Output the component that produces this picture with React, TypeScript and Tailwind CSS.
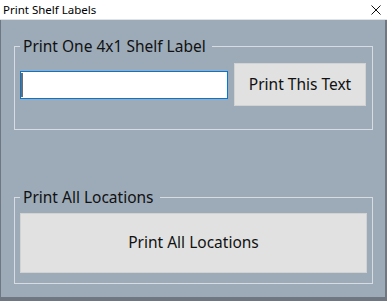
import { useState } from 'react';

const font = { fontFamily: '"Noto Sans", "Open Sans", sans-serif' };

export default function App() {
  const [text, setText] = useState('');

  return (
    <div className="w-[387px] h-[301px] flex flex-col bg-[#9dabb9] text-[#111]" style={font}>
      {/* title bar */}
      <div className="h-[20px] shrink-0 bg-white flex items-center justify-between pl-[3px] pr-[5px] border-b border-[#dfe3e7]">
        <span className="text-[11.5px] leading-none text-black">Print Shelf Labels</span>
        <svg width="10" height="10" viewBox="0 0 10 10" className="mr-[1px]">
          <path d="M0.5 0.5 L9.5 9.5 M9.5 0.5 L0.5 9.5" stroke="#111" strokeWidth="1" fill="none" />
        </svg>
      </div>

      <div className="flex-1 flex flex-col border-l border-r-2 border-b-4 border-[#6f7882] pl-[13px] pr-[12px]">
        <fieldset className="mt-[16px] h-[94px] border border-[#d6dce2] px-[5px]">
          <legend className="pl-[3px] pr-[6px] text-[15.5px] leading-5">Print One 4x1 Shelf Label</legend>
          <div className="mt-[7px] flex items-center gap-[6px]">
            <div className="relative">
              <input
                value={text}
                onChange={e => setText(e.target.value)}
                className="block w-[208px] h-[28px] bg-white border border-[#0078d7] outline-none px-[2px] text-[15.5px] caret-transparent"
              />
              {/* caret */}
              <span className="absolute left-[1px] top-[2px] w-[2px] h-[24px] bg-[#6d6d6d]" />
            </div>
            <button className="w-[132px] h-[43px] bg-[#e1e1e1] border border-[#d2d2d2] text-[15.5px]">
              Print This Text
            </button>
          </div>
        </fieldset>

        <fieldset className="mt-[57px] h-[97px] border border-[#d6dce2] px-[5px]">
          <legend className="pl-[3px] pr-[6px] text-[15.5px] leading-5">Print All Locations</legend>
          <button className="mt-[6px] w-full h-[60px] bg-[#e1e1e1] border border-[#d2d2d2] text-[15.5px]">
            Print All Locations
          </button>
        </fieldset>
      </div>
    </div>
  );
}
